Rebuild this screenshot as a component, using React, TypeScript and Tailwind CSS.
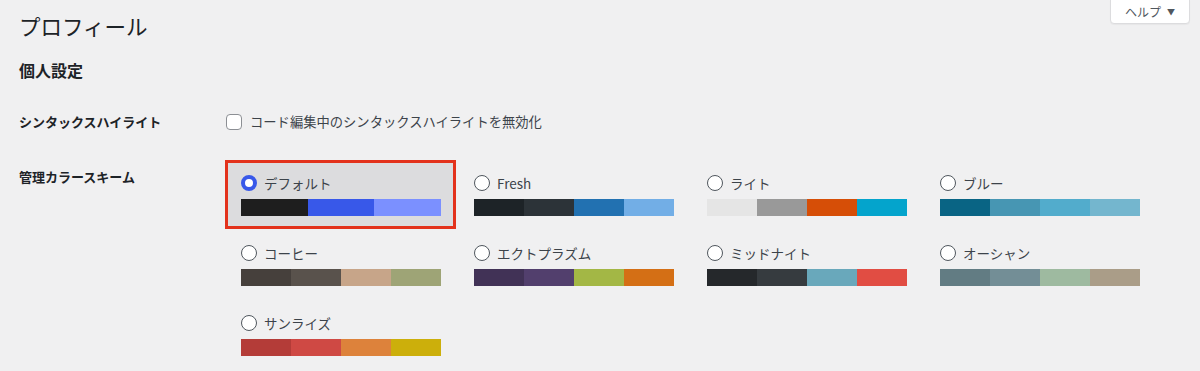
const schemes = [
  { name: 'デフォルト', colors: ['#1e1e1e', '#3858e9', '#7b90ff'], selected: true },
  { name: 'Fresh', colors: ['#1d2327', '#2c3338', '#2271b1', '#72aee6'] },
  { name: 'ライト', colors: ['#e5e5e5', '#999999', '#d64e07', '#04a4cc'] },
  { name: 'ブルー', colors: ['#096484', '#4796b3', '#52accc', '#74b6ce'] },
  { name: 'コーヒー', colors: ['#46403c', '#59524c', '#c7a589', '#9ea476'] },
  { name: 'エクトプラズム', colors: ['#413256', '#523f6d', '#a3b745', '#d46f15'] },
  { name: 'ミッドナイト', colors: ['#25282b', '#363b3f', '#69a8bb', '#e14d43'] },
  { name: 'オーシャン', colors: ['#627c83', '#738e96', '#9ebaa0', '#aa9d88'] },
  { name: 'サンライズ', colors: ['#b43c38', '#cf4944', '#dd823b', '#ccaf0b'] },
];

function Radio({ checked }: { checked?: boolean }) {
  if (checked) {
    return <span className="block w-4 h-4 rounded-full border-[4px] border-[#3858e9] bg-white shrink-0" />;
  }
  return <span className="block w-4 h-4 rounded-full border-[1.5px] border-[#50575e] bg-white shrink-0" />;
}

function ColorOption({ name, colors, selected }: { name: string; colors: string[]; selected?: boolean }) {
  return (
    <div
      className={
        selected
          ? 'h-[67px] px-[15px] pt-[12px] bg-[#dcdcde] outline-[3px] outline-solid outline-[#e3321c] outline-offset-[-2px]'
          : 'h-[67px] px-[15px] pt-[12px]'
      }
    >
      <div className="flex items-center gap-[7px] h-5">
        <Radio checked={selected} />
        <span className="text-[13.5px] leading-5 text-[#3c434a]">{name}</span>
      </div>
      <div className="flex w-[200px] h-[17px] mt-[6px]">
        {colors.map((c, i) => (
          <div key={i} className="flex-1 h-full" style={{ backgroundColor: c }} />
        ))}
      </div>
    </div>
  );
}

export default function App() {
  return (
    <div
      className="min-h-[371px] w-full bg-[#f0f0f1] text-[#3c434a]"
      style={{ fontFamily: '"Noto Sans CJK JP", "Noto Sans", sans-serif' }}
    >
      <div className="flex justify-between items-start pl-[19px] pr-[10px]">
        <h1 className="text-[21.5px] leading-[28px] mt-[12px] text-[#1d2327] font-normal">プロフィール</h1>
        <button className="w-[80px] h-[25px] -mt-px flex items-center justify-center gap-[6px] bg-white border border-[#dcdcde] rounded-b-[4px] shadow-[0_1px_1px_rgba(0,0,0,0.04)] text-[12px] text-[#50575e]">
          <span>ヘルプ</span>
          <span className="text-[8px]">▼</span>
        </button>
      </div>

      <div className="pl-[19px]">
        <h2 className="mt-[20px] text-[16px] leading-5 font-bold text-[#1d2327]">個人設定</h2>

        <div className="flex items-center mt-[34px] h-4">
          <div className="w-[207px] text-[13px] font-bold text-[#1d2327]">シンタックスハイライト</div>
          <label className="flex items-center gap-2">
            <span className="block w-4 h-4 rounded-[4px] border border-[#8c8f94] bg-white" />
            <span className="text-[13.3px] text-[#3c434a]">コード編集中のシンタックスハイライトを無効化</span>
          </label>
        </div>

        <div className="flex items-start mt-[31px]">
          <div className="w-[207px] mt-[6px] text-[13px] leading-5 font-bold text-[#1d2327]">管理カラースキーム</div>
          <div className="grid grid-cols-[repeat(4,229px)] gap-x-[4px] gap-y-[3px]">
            {schemes.map((s) => (
              <ColorOption key={s.name} name={s.name} colors={s.colors} selected={s.selected} />
            ))}
          </div>
        </div>
      </div>
    </div>
  );
}
